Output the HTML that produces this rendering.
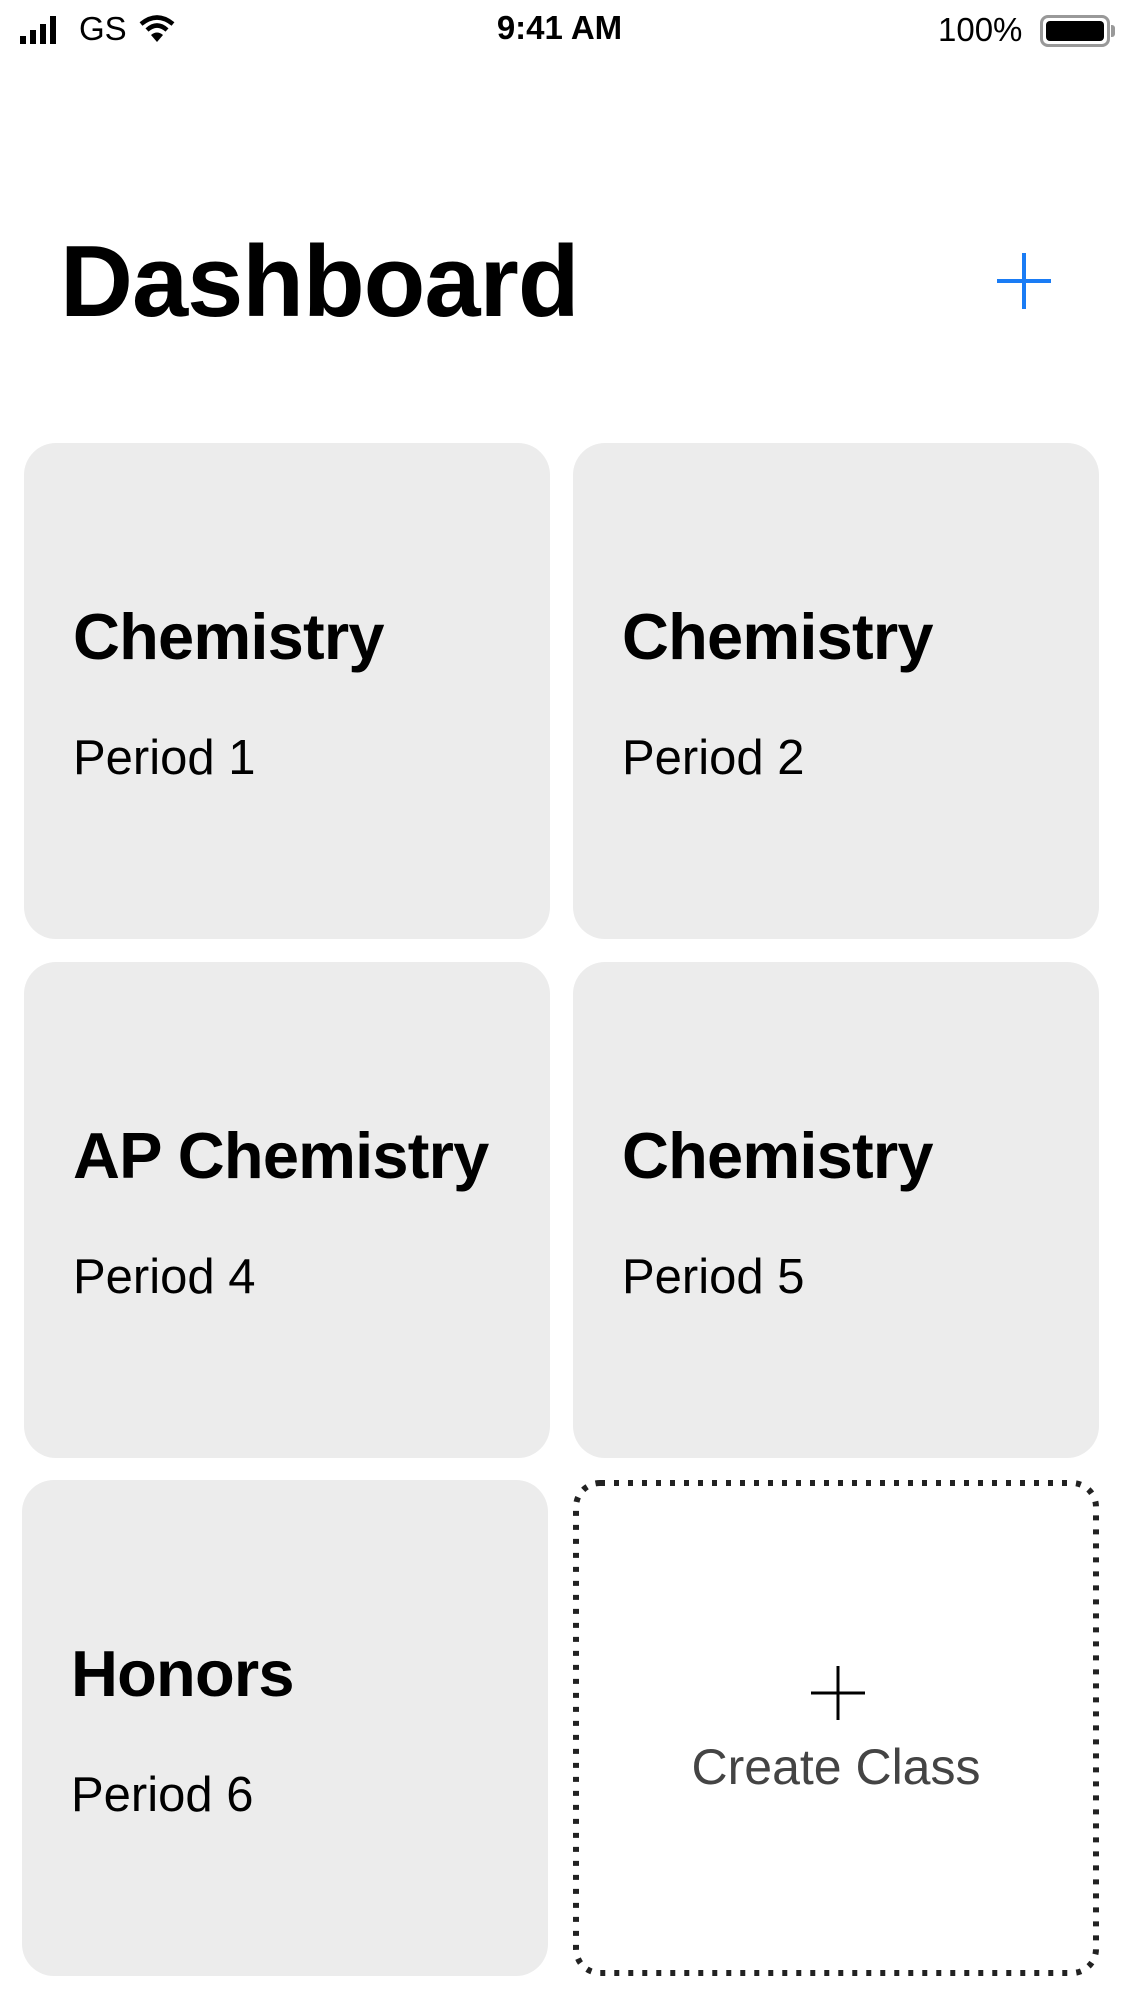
<!DOCTYPE html>
<html><head><meta charset="utf-8"><style>
*{margin:0;padding:0;box-sizing:border-box}
body{width:1125px;height:2001px;background:#fff;font-family:"Liberation Sans",sans-serif;position:relative;overflow:hidden;color:#000}
.abs{position:absolute}
.card{position:absolute;width:526px;height:496px;background:#ececec;border-radius:32px}
.t{position:absolute;left:49px;font-weight:bold;font-size:65px;line-height:1;letter-spacing:-0.8px}
.p{position:absolute;left:49px;font-size:49px;line-height:1}
</style></head><body>
<svg class="abs" style="left:20px;top:16px" width="50" height="28" viewBox="0 0 50 28">
<rect x="0" y="20" width="6" height="8" fill="#000"/><rect x="10" y="14" width="6" height="14" fill="#000"/><rect x="20" y="8" width="6" height="20" fill="#000"/><rect x="30" y="0" width="6" height="28" fill="#000"/></svg>
<div class="abs" style="left:79px;top:10px;font-size:33px">GS</div>
<svg class="abs" style="left:138px;top:14px" width="38" height="30" viewBox="0 0 38 30"><path d="M3 10 Q19 -3 35 10" stroke="#000" stroke-width="4.5" fill="none"/><path d="M9 16 Q19 7 29 16" stroke="#000" stroke-width="4.5" fill="none"/><path d="M13 21 L19 28 L25 21 Q19 16 13 21Z" fill="#000"/></svg>
<div class="abs" style="left:0;width:1125px;text-align:center;top:9px;font-size:33px;font-weight:bold;padding-right:6px">9:41 AM</div>
<div class="abs" style="left:938px;top:11px;font-size:33px">100%</div>
<div class="abs" style="left:1040px;top:15px;width:70px;height:32px;border:3px solid #999;border-radius:8px;padding:3px"><div style="width:100%;height:100%;background:#000;border-radius:4px"></div></div>
<div class="abs" style="left:1111px;top:25px;width:4px;height:12px;background:#999;border-radius:0 3px 3px 0"></div>
<div class="abs" style="left:60px;top:232px;font-size:101px;font-weight:bold;line-height:1;letter-spacing:-1px">Dashboard</div>
<svg class="abs" style="left:997px;top:253px" width="54" height="56"><path d="M27 0V56M0 28H54" stroke="#1a7cf5" stroke-width="4"/></svg>
<div class="card" style="left:24px;top:443px"><div class="t" style="top:161px">Chemistry</div><div class="p" style="top:291px">Period 1</div></div>
<div class="card" style="left:573px;top:443px"><div class="t" style="top:161px">Chemistry</div><div class="p" style="top:291px">Period 2</div></div>
<div class="card" style="left:24px;top:962px"><div class="t" style="top:161px">AP Chemistry</div><div class="p" style="top:291px">Period 4</div></div>
<div class="card" style="left:573px;top:962px"><div class="t" style="top:161px">Chemistry</div><div class="p" style="top:291px">Period 5</div></div>
<div class="card" style="left:22px;top:1480px"><div class="t" style="top:161px">Honors</div><div class="p" style="top:291px">Period 6</div></div>
<svg class="abs" style="left:573px;top:1480px" width="526" height="496"><rect x="3" y="3" width="520" height="490" rx="24" fill="none" stroke="#222" stroke-width="6" stroke-dasharray="5 9"/></svg>
<svg class="abs" style="left:811px;top:1666px" width="54" height="54"><path d="M27 0V54M0 27H54" stroke="#000" stroke-width="3"/></svg>
<div class="abs" style="left:573px;width:526px;text-align:center;top:1742px;font-size:50px;color:#444;line-height:1">Create Class</div>
</body></html>
